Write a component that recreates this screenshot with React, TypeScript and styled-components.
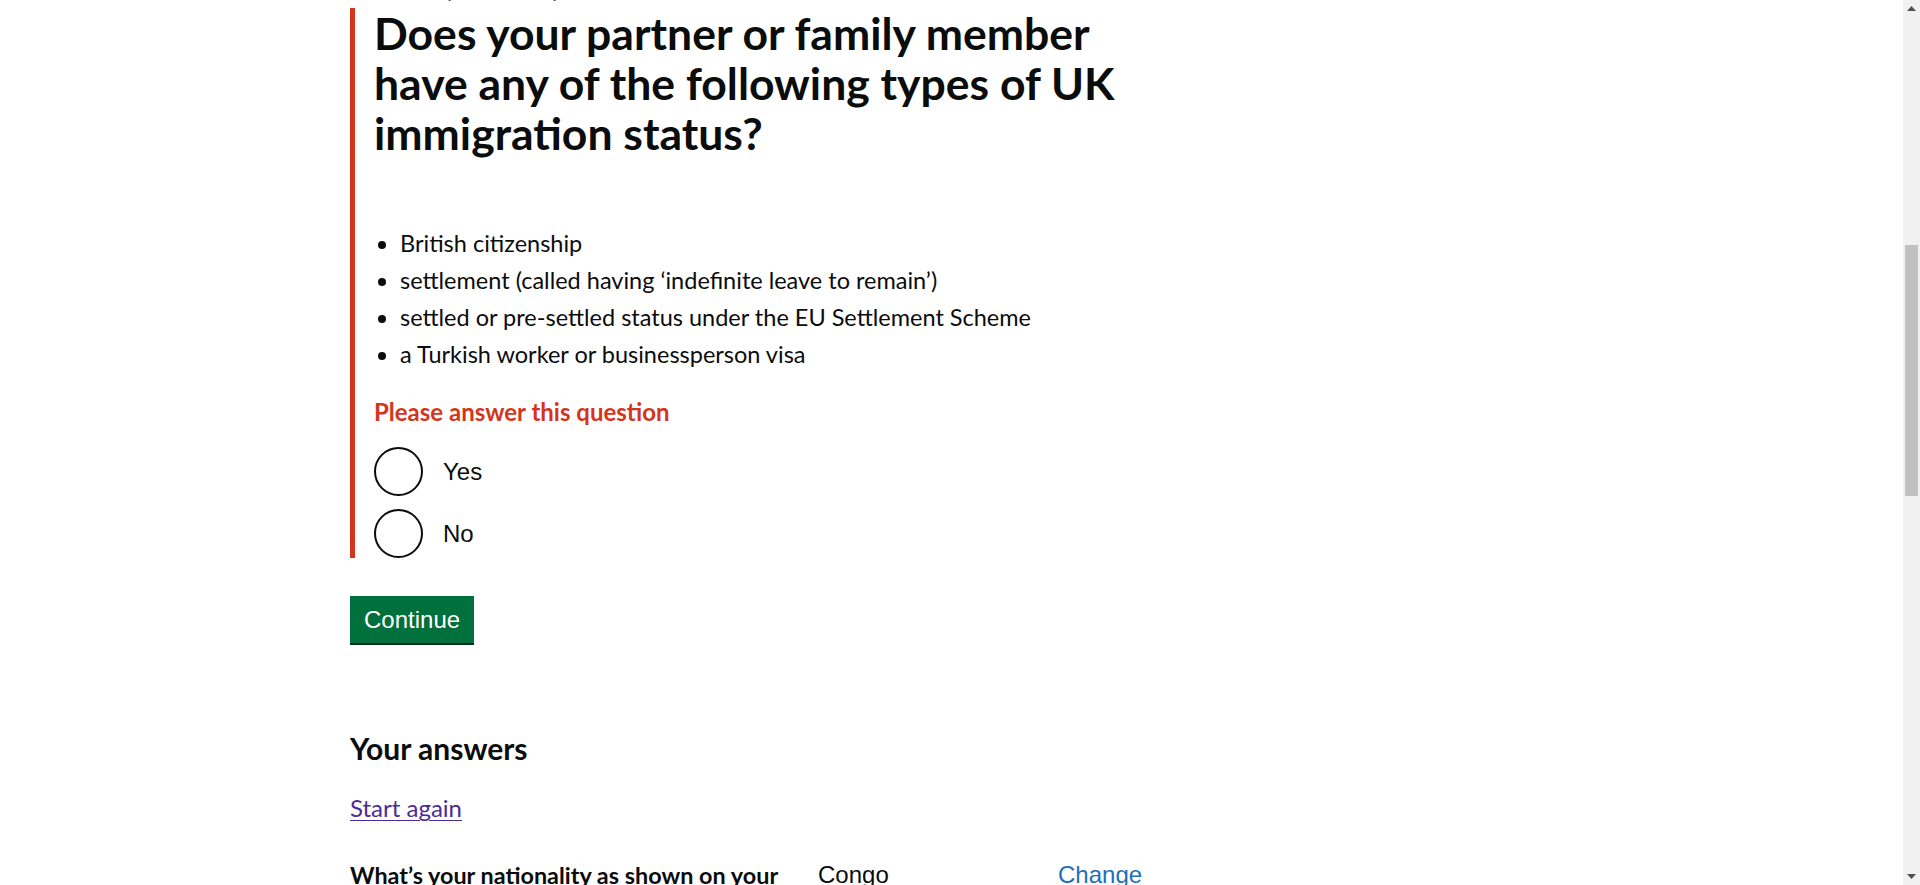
import styled, { createGlobalStyle } from "styled-components";

const statuses = [
  "British citizenship",
  "settlement (called having ‘indefinite leave to remain’)",
  "settled or pre-settled status under the EU Settlement Scheme",
  "a Turkish worker or businessperson visa",
];

const answers = [
  {
    question: "What’s your nationality as shown on your passport?",
    answer: "Congo",
  },
];

function App() {
  return (
    <>
      <GlobalStyle />
      <Page>
        <Main>
          <Caption>Check your family member’s status</Caption>
          <ErrorGroup>
            <Fieldset>
              <Heading>
                Does your partner or family member have any of the following
                types of UK immigration status?
              </Heading>
              <BulletList>
                {statuses.map((s) => (
                  <li key={s}>{s}</li>
                ))}
              </BulletList>
              <ErrorMessage>Please answer this question</ErrorMessage>
              <Radios>
                <RadioItem>
                  <RadioCircle />
                  <RadioLabel>Yes</RadioLabel>
                </RadioItem>
                <RadioItem>
                  <RadioCircle />
                  <RadioLabel>No</RadioLabel>
                </RadioItem>
              </Radios>
            </Fieldset>
          </ErrorGroup>
          <Button>Continue</Button>

          <SubHeading>Your answers</SubHeading>
          <StartAgain href="#">Start again</StartAgain>

          <SummaryList>
            {answers.map((a) => (
              <SummaryRow key={a.question}>
                <SummaryKey>{a.question}</SummaryKey>
                <SummaryValue>{a.answer}</SummaryValue>
                <SummaryAction href="#">Change</SummaryAction>
              </SummaryRow>
            ))}
          </SummaryList>
        </Main>
      </Page>

      {/* the window's scrollbar, as it shows in the screenshot */}
      <ScrollBar aria-hidden>
        <ScrollArrow>
          <svg width="9" height="5" viewBox="0 0 9 5">
            <path d="M0 5h9L4.5 0z" fill="#505050" />
          </svg>
        </ScrollArrow>
        <ScrollTrack>
          <ScrollThumb />
        </ScrollTrack>
        <ScrollArrow>
          <svg width="9" height="5" viewBox="0 0 9 5">
            <path d="M0 0h9L4.5 5z" fill="#505050" />
          </svg>
        </ScrollArrow>
      </ScrollBar>
    </>
  );
}

const GlobalStyle = createGlobalStyle`
  body {
    margin: 0;
    background: #ffffff;
    color: #0b0c0c;
    font-family: Lato, "Liberation Sans", Arial, sans-serif;
  }
`;

const Page = styled.div`
  width: 1220px;
  margin: 0 auto;
  padding-bottom: 60px;
`;

const Main = styled.main`
  width: 800px;
`;

const Caption = styled.span`
  display: block;
  margin-top: -28px;
  margin-bottom: 4px;
  padding-left: 24px;
  color: #505a5f;
  font-size: 24px;
  line-height: 32px;
`;

const ErrorGroup = styled.div`
  border-left: 5px solid #d4351c;
  padding-left: 19px;
  margin-bottom: 38px;
`;

const Fieldset = styled.fieldset`
  margin: 0;
  padding: 0;
  border: 0;
  min-width: 0;
`;

const Heading = styled.h1`
  max-width: 770px;
  margin: 0 0 69px;
  font-size: 44.5px;
  line-height: 50px;
  font-weight: 700;
`;

const BulletList = styled.ul`
  margin: 0 0 26px;
  padding-left: 26px;
  font-size: 23.5px;
  line-height: 32px;
  li {
    margin-bottom: 5px;
  }
`;

const ErrorMessage = styled.p`
  margin: 0 0 19px;
  color: #d4351c;
  font-size: 24px;
  line-height: 32px;
  font-weight: 700;
`;

const Radios = styled.div`
  display: flex;
  flex-direction: column;
  gap: 13px;
`;

const RadioItem = styled.label`
  display: flex;
  align-items: center;
  gap: 20px;
  cursor: pointer;
`;

const RadioCircle = styled.span`
  width: 45px;
  height: 45px;
  border: 2px solid #0b0c0c;
  border-radius: 50%;
  flex-shrink: 0;
`;

const RadioLabel = styled.span`
  font-family: "Liberation Sans", Arial, sans-serif;
  font-size: 24px;
  line-height: 32px;
`;

const Button = styled.button`
  display: block;
  height: 47px;
  padding: 0 14px;
  border: 0;
  border-radius: 0;
  background: #00703c;
  box-shadow: 0 2px 0 #002d18;
  color: #ffffff;
  font-family: "Liberation Sans", Arial, sans-serif;
  font-size: 24px;
  line-height: 1;
  cursor: pointer;
`;

const SubHeading = styled.h2`
  margin: 85px 0 24px;
  font-size: 30px;
  line-height: 40px;
  font-weight: 700;
`;

const StartAgain = styled.a`
  display: inline-block;
  color: #4c2c92;
  font-size: 24px;
  line-height: 32px;
  text-decoration: underline;
  text-underline-offset: 3px;
  text-decoration-thickness: 1px;
`;

const SummaryList = styled.dl`
  margin: 35px 0 0;
`;

const SummaryRow = styled.div`
  display: grid;
  grid-template-columns: 468px 240px auto;
  padding-bottom: 10px;
  border-bottom: 1px solid #b1b4b6;
`;

const SummaryKey = styled.dt`
  padding-right: 20px;
  font-size: 23.4px;
  line-height: 32px;
  font-weight: 700;
`;

const SummaryValue = styled.dd`
  margin: 0;
  font-family: "Liberation Sans", Arial, sans-serif;
  font-size: 24px;
  line-height: 32px;
`;

const SummaryAction = styled.a`
  color: #1d70b8;
  font-family: "Liberation Sans", Arial, sans-serif;
  font-size: 24px;
  line-height: 32px;
  text-decoration: none;
`;

const ScrollBar = styled.div`
  position: fixed;
  top: 0;
  right: 0;
  width: 17px;
  height: 100vh;
  display: flex;
  flex-direction: column;
  background: #f1f1f1;
`;

const ScrollArrow = styled.div`
  height: 17px;
  display: flex;
  align-items: center;
  justify-content: center;
`;

const ScrollTrack = styled.div`
  flex: 1;
  padding: 0 2px;
`;

const ScrollThumb = styled.div`
  margin-top: 228px;
  height: 251px;
  background: #c1c1c1;
`;

export default App;
